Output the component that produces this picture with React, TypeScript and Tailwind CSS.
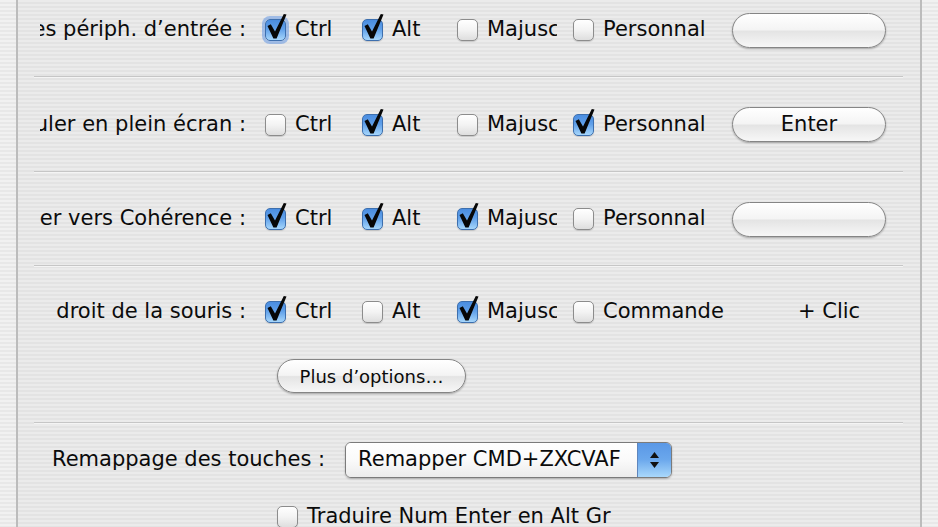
import React from "react";

// case à cocher façon Aqua
function Check({ on, focus }: { on?: boolean; focus?: boolean }) {
  return (
    <span
      className={
        "relative inline-block w-[21px] h-[22px] shrink-0 rounded-[5px] border " +
        (on
          ? "border-[#3d6fae] bg-[linear-gradient(180deg,#4a8de0_0%,#5f9fe9_45%,#a6d6fb_100%)]"
          : "border-[#8c8c8c] bg-[linear-gradient(180deg,#ffffff_0%,#f3f3f3_50%,#dedede_100%)]") +
        (focus ? " shadow-[0_0_0_3px_rgba(98,150,225,0.55)]" : " shadow-[0_1px_1px_rgba(0,0,0,0.15)]")
      }
    >
      {on && (
        <svg className="absolute left-0 top-[-8px]" width="24" height="30" viewBox="0 0 24 30">
          <path d="M1.5 14 L4.8 12.3 L9 19.5 L17.8 2 L20.5 2.6 L10.6 26.5 L7.4 26.5 Z" fill="#070707" />
        </svg>
      )}
    </span>
  );
}

function Item({ on, focus, label, w, clip }: { on?: boolean; focus?: boolean; label: string; w: string; clip?: boolean }) {
  return (
    <div className={"flex items-center gap-[9px] shrink-0 " + w}>
      <Check on={on} focus={focus} />
      <span className={clip ? "w-[70px] overflow-hidden whitespace-nowrap" : "whitespace-nowrap"}>{label}</span>
    </div>
  );
}

function Pill({ children, w }: { children?: React.ReactNode; w: string }) {
  return (
    <div
      className={
        "flex items-center justify-center h-[35px] rounded-full border border-[#858585] bg-[linear-gradient(180deg,#ffffff_0%,#f4f4f4_48%,#e4e4e4_52%,#f7f7f7_100%)] shadow-[0_1px_2px_rgba(0,0,0,0.3)] shrink-0 " +
        w
      }
    >
      {children}
    </div>
  );
}

function Label({ text }: { text: string }) {
  return (
    <div className="w-[206px] ml-[6px] shrink-0 flex justify-end overflow-hidden whitespace-nowrap">
      <span>{text}</span>
    </div>
  );
}

function Sep() {
  return <div className="h-[2px] bg-[#c6c6c6] border-b border-[#f4f4f4]" />;
}

export default function App() {
  return (
    <div className="w-[938px] h-[527px] overflow-hidden flex bg-[image:repeating-linear-gradient(180deg,#f1f1f1_0px,#f1f1f1_2px,#e8e8e8_2px,#e8e8e8_4px)] font-['DejaVu_Sans',sans-serif] text-[21px] text-[#0b0b0b]">
      <div className="w-[16px] shrink-0" />
      <div className="w-[906px] shrink-0 border-l-2 border-r-2 border-[#bcbcbc] bg-[image:repeating-linear-gradient(180deg,#ebebeb_0px,#ebebeb_2px,#e3e3e3_2px,#e3e3e3_4px)] pl-[16px] pr-[17px]">
        {/* périphériques */}
        <div className="flex items-center h-[76px] pb-[16px]">
          <Label text="Libérer les périph. d’entrée :" />
          <div className="flex items-center ml-[19px]">
            <Item on focus label="Ctrl" w="w-[97px]" />
            <Item on label="Alt" w="w-[95px]" />
            <Item label="Majuscule" w="w-[116px]" clip />
            <Item label="Personnal" w="w-[159px]" />
            <Pill w="w-[154px]" />
          </div>
        </div>
        <Sep />
        {/* plein écran */}
        <div className="flex items-center h-[93px]">
          <Label text="Basculer en plein écran :" />
          <div className="flex items-center ml-[19px]">
            <Item label="Ctrl" w="w-[97px]" />
            <Item on label="Alt" w="w-[95px]" />
            <Item label="Majuscule" w="w-[116px]" clip />
            <Item on label="Personnal" w="w-[159px]" />
            <Pill w="w-[154px]">Enter</Pill>
          </div>
        </div>
        <Sep />
        {/* cohérence */}
        <div className="flex items-center h-[92px]">
          <Label text="Basculer vers Cohérence :" />
          <div className="flex items-center ml-[19px]">
            <Item on label="Ctrl" w="w-[97px]" />
            <Item on label="Alt" w="w-[95px]" />
            <Item on label="Majuscule" w="w-[116px]" clip />
            <Item label="Personnal" w="w-[159px]" />
            <Pill w="w-[154px]" />
          </div>
        </div>
        <Sep />
        {/* clic droit */}
        <div className="pb-[29px]">
          <div className="flex items-center h-[90px]">
            <Label text="droit de la souris :" />
            <div className="flex items-center ml-[19px]">
              <Item on label="Ctrl" w="w-[97px]" />
              <Item label="Alt" w="w-[95px]" />
              <Item on label="Majuscule" w="w-[116px]" clip />
              <Item label="Commande" w="w-[225px]" />
              <span className="whitespace-nowrap">+ Clic</span>
            </div>
          </div>
          <div className="flex mt-[2px] ml-[243px]">
            <div className="flex items-center justify-center w-[189px] h-[34px] rounded-full border border-[#858585] bg-[linear-gradient(180deg,#ffffff_0%,#f4f4f4_48%,#e4e4e4_52%,#f7f7f7_100%)] shadow-[0_1px_2px_rgba(0,0,0,0.3)] text-[18px]">
              Plus d’options…
            </div>
          </div>
        </div>
        <Sep />
        {/* remappage */}
        <div className="pt-[18px]">
          <div className="flex items-center pl-[18px]">
            <span className="whitespace-nowrap">Remappage des touches :</span>
            <div className="ml-[20px] flex w-[327px] h-[36px] rounded-[6px] border border-[#7b7b7b] overflow-hidden shadow-[0_1px_2px_rgba(0,0,0,0.25)]">
              <div className="flex-1 flex items-center pl-[12px] bg-[linear-gradient(180deg,#ffffff_0%,#fafafa_50%,#ececec_100%)] whitespace-nowrap">
                Remapper CMD+ZXCVAF
              </div>
              <div className="w-[34px] flex flex-col items-center justify-center gap-[4px] border-l border-[#5f86bd] bg-[linear-gradient(180deg,#5a98e6_0%,#6aa7ec_48%,#a9d8fb_100%)]">
                <svg width="9" height="6" viewBox="0 0 9 6"><path d="M4.5 0 L9 6 L0 6 Z" fill="#111" /></svg>
                <svg width="9" height="6" viewBox="0 0 9 6"><path d="M0 0 L9 0 L4.5 6 Z" fill="#111" /></svg>
              </div>
            </div>
          </div>
          <div className="flex items-center gap-[9px] ml-[243px] mt-[23px]">
            <Check />
            <span className="whitespace-nowrap">Traduire Num Enter en Alt Gr</span>
          </div>
        </div>
      </div>
    </div>
  );
}
